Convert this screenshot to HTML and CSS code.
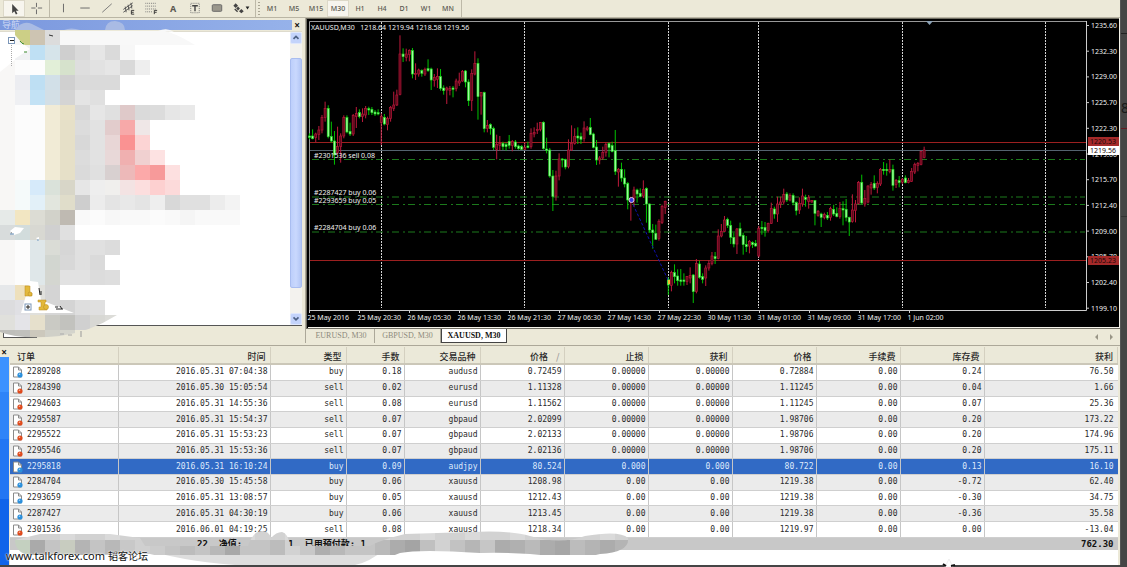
FILE: index.html
```html
<!DOCTYPE html>
<html lang="zh-CN">
<head>
<meta charset="utf-8">
<title>XAUUSD,M30</title>
<link rel="stylesheet" href="styles.css">
</head>
<body>
<div class="desktop">
<div class="app">
  <header class="toolbar">
    <button class="tool active" aria-label="Cursor"><svg viewBox="0 0 22 18"><path d="M9 3v10l2.300-2 1.800 3.500 1.700-.8-1.700-3.400h3z" fill="#444"/></svg></button>
    <button class="tool" aria-label="Crosshair"><svg viewBox="0 0 22 18"><path d="M11.500 3v4.500M11.500 10v5M6 8.500h4.500M13 8.500h4.500" stroke="#666" fill="none"/></svg></button>
    <span class="sep"></span>
    <button class="tool" aria-label="Vertical line"><svg viewBox="0 0 22 18"><path d="M11.500 4v9" stroke="#666"/></svg></button>
    <button class="tool" aria-label="Horizontal line"><svg viewBox="0 0 22 18"><path d="M6 8.500h10" stroke="#666"/></svg></button>
    <button class="tool" aria-label="Trendline"><svg viewBox="0 0 22 18"><path d="M6 13 16 4" stroke="#777"/></svg></button>
    <button class="tool" aria-label="Channel"><svg viewBox="0 0 22 18"><path d="M5 10 15 3M5 13l10-7M7 7l1 6M10 5l1 6M13 3l1 6" stroke="#555" fill="none"/><path d="M16.500 11h-3v4h3M13.500 13h2.500" stroke="#333" fill="none"/></svg></button>
    <button class="tool" aria-label="Fibonacci"><svg viewBox="0 0 22 18"><path d="M5 3.500h12M5 6.500h12M5 9.500h12M5 12.500h7" stroke="#777" stroke-dasharray="1 1"/><path d="M14.500 15v-4h3M14.500 13h2.500" stroke="#333" fill="none"/></svg></button>
    <button class="tool glyph">A</button>
    <button class="tool" aria-label="Text label"><svg viewBox="0 0 22 18"><rect x="6.500" y="3.500" width="9" height="10" fill="none" stroke="#777" stroke-dasharray="1 1"/><path d="M8 6h6M11 6v6" stroke="#444" stroke-width="1.500"/></svg></button>
    <button class="tool" aria-label="Rectangle"><svg viewBox="0 0 22 18"><rect x="6" y="5" width="10" height="7" rx="1" fill="#9a978c" stroke="#666"/></svg></button>
    <button class="tool wide" aria-label="Arrows"><svg viewBox="0 0 22 18"><path d="m5 6 2.500-2.500L10 6 7.500 8.500zM8 9l2-2 2 2-2 2zM11 12l2.500-2.500L16 12l-2.500 2zM6 10l1-1 3 3-1 1z" fill="#444"/><path d="M18 7h4l-2 3z" fill="#222"/></svg></button>
    <span class="sep"></span>
    <span class="grip"></span>
    <button class="tool period">M1</button>
    <button class="tool period">M5</button>
    <button class="tool period">M15</button>
    <button class="tool period active">M30</button>
    <button class="tool period">H1</button>
    <button class="tool period">H4</button>
    <button class="tool period">D1</button>
    <button class="tool period">W1</button>
    <button class="tool period">MN</button>
    <span class="sep"></span>
  </header>

  <main class="work">
    <aside class="nav">
      <div class="nav-head"><h2 class="nav-title">导航</h2><button class="close" aria-label="Close">×</button></div>
      <div class="tree">
        <div class="tree-body"></div>
        <div class="scroll">
          <button class="scroll-btn" aria-label="Up"><svg viewBox="0 0 10 12"><path d="m2 7 3-3 3 3" fill="none" stroke="#4d6185" stroke-width="2"/></svg></button>
          <span class="thumb"></span>
          <button class="scroll-btn" aria-label="Down"><svg viewBox="0 0 10 12"><path d="m2 4 3 3 3-3" fill="none" stroke="#4d6185" stroke-width="2"/></svg></button>
        </div>
      </div>
      <div class="nav-tabs"><span class="nav-tab"></span></div>
      <svg class="nav-blur" viewBox="0 18 306 325" aria-hidden="true">
        <defs><clipPath id="brush"><path d="M15 30H300V310L117 315Q90 332 60 336Q20 340 0 332V70Q15 58 30 49L22 43 15 35z"/></clipPath></defs>
        <path d="M15 31H165Q175 33 195 45H15z" fill="#f8f8f8"/>
        <path d="M15 30Q22 20 32 24L44 30zM64 30Q71 27 80 30zM105 30Q106 21 115 21Q125 22 125 30z" fill="#a9bbe4"/>
        <path d="M158 31Q167 27 174 32z" fill="#f8f8f8"/>
        <path d="M0 72 15 60V320H0z" fill="#f8f7f6"/>
        <path d="M11.500 45v22" stroke="#aaa" stroke-dasharray="1 1"/>
        <rect x="8.500" y="37.500" width="6" height="6" fill="#fff" stroke="#7b96b8"/><path d="M10 40.500h4" stroke="#222"/>
        <g id="nav-cells" clip-path="url(#brush)"></g>
        <path d="M20 41q2 3 4 3M24 52h3" stroke="#3c8a2c" fill="none"/><path d="M49 35l4 1M11 233l3-2" stroke="#333"/>
        <path d="M10 231l5-4 9 1-4 5-6 2zM36 238l3-1v4z" fill="#fff"/><path d="M10 234h4M37 240h2" stroke="#6a93bd"/>
        <path d="M21 313 30 281l8 1 3 18 33 13z" fill="#fff"/>
        <g fill="#e3b93c" stroke="#b88a1e" stroke-width=".5"><path d="M25 286h5v7h2v3h-7zM38 300h8v2h-1v5h2v3h-8v-3h2v-5h-3z"/><circle cx="30" cy="294" r="2"/><circle cx="46" cy="307" r="2.500"/></g>
        <rect x="25" y="304" width="6" height="6" fill="#fff" stroke="#7b96b8"/><path d="M26 307h4M28 305v4M39 288l1 7M41 291v4M55 307h3M56 309h7M60 306l2 3" stroke="#222"/>
        <path d="M81 331v6" stroke="#999"/><path d="M60 334h4M68 335h4" stroke="#aaa"/>
      </svg>
    </aside>

    <section class="charts">
      <svg class="chart" id="chart" viewBox="306 18 814 310" role="img" aria-label="XAUUSD,M30">
        <rect x="306" y="18" width="814" height="310" fill="#000"/>
        <path d="M306 18.500h814" stroke="#716f64"/><path d="M306.500 18v310" stroke="#716f64"/>
        <path d="M1119.500 18v310M308 327.500h812" stroke="#f4f2e8"/>
        <g id="grid-v" stroke="#d2d2d2" stroke-dasharray="2 1"></g>
        <g id="orders" stroke="#1c7a1c" stroke-dasharray="7 4 2 3"></g>
        <path d="M309 142.500h777M309 260.500h777" stroke="#9c2020"/>
        <path d="M309 150.500h777" stroke="#54636f"/>
        <path d="M309.500 310V21.500H1086" stroke="#999" fill="none"/>
        <path d="M309 310.500h777.500V21" stroke="#ccc" fill="none"/>
        <g id="candles" transform="scale(.333333)"></g>
        <path d="M631 200 668 280" stroke="#1010b0" stroke-dasharray="3 2"/>
        <circle cx="631.500" cy="200" r="2.500" fill="#3a38e0" stroke="#e6c8d8"/><path d="M669 280v4" stroke="#f0c030" stroke-width="2"/>
        <path d="M926 21h7l-3.500 4z" fill="#8ca2b6"/>
        <g class="chart-text" id="labels">
          <text x="311" y="30" xml:space="preserve">XAUUSD,M30   1218.64 1219.94 1218.58 1219.56</text>
        </g>
        <rect x="1088" y="137" width="31" height="9" fill="#a52a2a"/>
        <rect x="1088" y="146" width="31" height="9" fill="#fff"/>
        <rect x="1088" y="256" width="31" height="9" fill="#a52a2a"/>
        <g class="tag-text"><text x="1090" y="144">1220.53</text><text x="1090" y="153">1219.56</text><text x="1090" y="263">1205.23</text></g>
      </svg>
      <nav class="chart-tabs">
        <button class="chart-tab">EURUSD, M30</button>
        <button class="chart-tab">GBPUSD, M30</button>
        <button class="chart-tab current">XAUUSD, M30</button>
        <span class="tab-arrows"><svg viewBox="0 0 20 8"><path d="M4 1v6L1 4zM16 1v6l3-3z" fill="#999586"/></svg></span>
      </nav>
    </section>
  </main>

  <section class="terminal">
    <div class="side"><button class="close" aria-label="Close">×</button><span class="side-bar"></span></div>
    <div class="ledger">
      <table class="orders">
        <colgroup><col class="w108"><col class="w152"><col class="w76"><col class="w58"><col class="w76"><col class="w84"><col class="w84"><col class="w84"><col class="w84"><col class="w84"><col class="w84"><col></colgroup>
        <thead><tr><th class="first">订单</th><th>时间</th><th>类型</th><th>手数</th><th>交易品种</th><th>价格 <span class="sort">/</span></th><th>止损</th><th>获利</th><th>价格</th><th>手续费</th><th>库存费</th><th>获利</th></tr></thead>
        <tbody id="rows"></tbody>
        <tfoot><tr><td colspan="11"><div class="summary"><span>22</span><span class="equity">净值:</span><span>1</span><span>已用预付款: 1</span><span class="tail">5</span></div></td><td>762.30</td></tr></tfoot>
      </table>
      <svg class="foot-blur" viewBox="10 530 640 35" aria-hidden="true">
        <defs><clipPath id="smear"><path d="M15 540 40 534H110L140 538 145 546H248Q253 531 262 531Q269 531 271 538Q276 532 282 532Q288 533 290 546H370Q380 540 405 534L470 532Q510 530 530 536Q560 545 585 536Q620 530 628 538Q630 552 600 554Q580 560 550 556Q520 552 480 553Q420 549 400 553Q370 566 300 567Q200 566 150 554L30 556Q15 552 15 540z"/></clipPath></defs>
        <path d="M145 549H385Q370 562 355 565H235Q175 560 145 549z" fill="#dedede"/>
        <g id="foot-cells" clip-path="url(#smear)"></g>
      </svg>
      <svg class="spark" viewBox="0 0 16 8" aria-hidden="true"><path d="M8 0 4 8h8z" fill="#fff" stroke="#eee"/><path d="m2 5 3 2M10 7l4-1" stroke="#111" stroke-width="2"/></svg>
    </div>
    <p class="watermark">www.talkforex.com <span class="watermark-cn">韬客论坛</span></p>
  </section>
</div>
<div class="edge" aria-hidden="true"><span class="edge-a"></span><span class="edge-b">8</span><span class="edge-c"></span></div>
</div>
<script src="main.js"></script>
</body>
</html>
```
FILE: styles.css
```css
* { box-sizing: border-box; }
body { margin: 0; background: #454545; font-family: "Noto Sans", "Noto Sans CJK SC", sans-serif; font-size: 8px; }
button { font: inherit; border: 0; padding: 0; background: none; color: inherit; }
h2, p { margin: 0; font-weight: normal; }
svg { display: block; }

.desktop { display: flex; min-height: 100vh; padding-bottom: 2px; overflow: hidden; }
.app { flex: 1; min-width: 0; display: flex; flex-direction: column; background: #ece9d8; }
.edge { width: 7px; flex: none; display: flex; flex-direction: column; overflow: hidden; border-left: 1px solid #555; color: #191919; }
.edge-a { height: 34px; border-bottom: 1px solid #222; }
.edge-b { height: 95px; padding-top: 64px; font-size: 14px; border-bottom: 1px solid #631c22; }
.edge-c { height: 88px; border-bottom: 1px solid #333; }

.toolbar { height: 18px; display: flex; align-items: center; border-bottom: 1px solid #b9b5a4; padding-left: 3px; }
.tool { width: 22px; height: 17px; flex: none; text-align: center; color: #5a5850; }
.tool svg { width: 22px; height: 17px; overflow: visible; }
.tool.active { background: #f7f5ee; border: 1px solid #dcd8c8; }
.tool.active svg { width: 20px; }
.tool.wide { width: 25px; }
.glyph { font-size: 9px; font-weight: 700; }
.period { font-size: 7px; font-weight: 500; }
.sep { width: 1px; height: 17px; background: #bdb9a8; margin: 0 2px; }
.grip { width: 2px; height: 13px; margin-right: 1px; background: repeating-linear-gradient(#aaa694 0 1px, transparent 1px 3px); }

.work { display: flex; }
.nav { width: 306px; flex: none; position: relative; display: flex; flex-direction: column; border-right: 1px solid #aca899; }
.nav-head { height: 13px; display: flex; align-items: center; padding-top: 1px; }
.nav-title { width: 292px; height: 10px; line-height: 10px; padding-left: 2px; font-size: 9px; color: #cfdaf5; background: linear-gradient(90deg, #7b98de, #96b2ea); }
.close { width: 10px; line-height: 10px; font-size: 10px; font-weight: 700; color: #111; }
.tree { flex: 1; display: flex; width: 302px; background: #fff; border-bottom: 1px solid #555; border-top: 1px solid #dedbcd; }
.tree-body { flex: 1; }
.scroll { width: 12px; display: flex; flex-direction: column; justify-content: space-between; background: #f3f2ee; }
.scroll-btn { height: 12px; background: #c3d3fb; border-radius: 2px; border: 1px solid #dfe7fc; }
.scroll-btn svg { width: 10px; height: 10px; }
.thumb { flex: 1; margin: 14px 0 25px; background: linear-gradient(90deg, #bdcffb, #c9d8fd, #b3c6f5); border: 1px solid #a9bdf0; border-radius: 2px; }
.nav-tabs { height: 17px; padding-left: 3px; }
.nav-tab { display: block; width: 34px; height: 12px; background: #fff; border: 1px solid #555; border-top: 0; }
.nav-blur { position: absolute; inset: 0; width: 306px; }

.charts { flex: 1; min-width: 0; }
.chart { width: 100%; }
.chart-text, .tag-text { font-family: "Noto Sans", sans-serif; font-size: 7px; fill: #f0f0f0; }
.tag-text { fill: #1a0808; }
.chart-tabs { height: 15px; display: flex; align-items: flex-start; border-top: 1px solid #716f64; }
.chart-tab { width: 66px; height: 14px; line-height: 14px; font-family: "Liberation Serif", serif; font-size: 8px; color: #8d8a7c; border-right: 1px solid #aca899; }
.chart-tab:first-child { width: 67px; margin-left: 2px; }
.chart-tab.current { background: #fff; color: #111; border: 1px solid #444; border-top: 0; font-weight: 700; }
.tab-arrows { margin: 4px 6px 0 auto; width: 20px; }

.terminal { flex: 1; display: flex; position: relative; margin-top: 2px; border-top: 1px solid #aca899; padding-top: 1px; }
.side { width: 10px; flex: none; display: flex; flex-direction: column; }
.side .close { width: 8px; height: 10px; }
.side-bar { flex: 1; width: 9px; background: linear-gradient(#3c92ff 0 35px, #2f84f8 35px 82px, #2276f3 82px 142px, #1064ea 142px); }
.ledger { flex: 1; min-width: 0; position: relative; background: #fff; border-right: 2px solid #ece9d8; }
.orders { width: 100%; height: 203px; table-layout: fixed; border-collapse: collapse; font-family: "DejaVu Sans Mono", monospace; font-size: 8px; line-height: 12px; color: #2a2a2a; }
.w108 { width: 108px; } .w152 { width: 152px; } .w76 { width: 76px; } .w58 { width: 58px; } .w84 { width: 84px; }
.orders thead tr { height: 17px; }
.orders th { background: #ebe9d9; border-bottom: 2px solid #cbc7b8; border-right: 1px solid #d4d0c0; padding: 2px 4px 0; font: 500 9px/13px "Noto Sans CJK SC", sans-serif; text-align: right; white-space: nowrap; }
.orders th.first { text-align: left; padding-left: 7px; }
.sort { color: #999; margin: 0 0 0 6px; }
.orders td { padding: 0 2px; text-align: right; border-right: 1px solid #c6c6c6; border-bottom: 1px solid #cfcfcf; white-space: nowrap; }
.orders td:last-child { padding-right: 4px; border-right: 0; }
.orders tbody tr:nth-child(even) { background: #ebebeb; }
.orders tbody tr.selected { background: #316ac5; color: #dfe9fb; }
.ticket { display: flex; align-items: center; gap: 4px; }
.ticket svg { width: 11px; height: 12px; }
.orders tfoot td { background: #c8c8c8; border: 0; font-size: 9px; font-weight: 700; color: #111; }
.summary { display: flex; gap: 11px; padding-left: 185px; font-family: "DejaVu Sans Mono", "Noto Sans CJK SC", monospace; line-height: 12px; }
.equity { margin-right: 35px; }
.tail { margin-left: 242px; }
.foot-blur { position: absolute; left: 0; bottom: 0; width: 640px; height: 35px; }
.spark { position: absolute; right: 161px; bottom: -2px; width: 16px; }
.watermark { position: absolute; left: 6px; bottom: 1px; font-size: 11px; line-height: 15px; color: #111; text-shadow: 0 0 2px #fff, 0 0 2px #fff; }
.watermark-cn { font-size: 10px; }
```
FILE: main.js
```js
const NS = 'http://www.w3.org/2000/svg';
function add(parent, tag, attrs, text) {
  const el = document.createElementNS(NS, tag);
  for (const k in attrs) el.setAttribute(k, attrs[k]);
  if (text) el.textContent = text;
  parent.appendChild(el);
}
const $ = id => document.getElementById(id);

[381.5, 524.5, 668.5, 758.5, 902.5, 1045.5].forEach(x => add($('grid-v'), 'path', { d: `M${x} 22V308` }));
[159.5, 197, 204.5, 232].forEach(y => add($('orders'), 'path', { d: `M312 ${y}H1085` }));
[['#2301536 sell 0.08', 158], ['#2287427 buy 0.06', 195], ['#2293659 buy 0.05', 203], ['#2284704 buy 0.06', 230]]
  .forEach(([t, y]) => add($('labels'), 'text', { x: 314, y }, t));
['1235.60', '1232.30', '1229.00', '1225.70', '1222.30', '1219.00', '1215.70', '1212.40', '1209.00', '1205.70', '1202.40', '1199.10']
  .forEach((t, i) => {
    const y = 25.5 + i * 25.7;
    add($('labels'), 'text', { x: 1091, y: y + 2.5 }, t);
    add($('labels'), 'path', { d: `M1086 ${y}h3`, stroke: '#ccc' });
  });
['25 May 2016', '25 May 20:30', '26 May 05:30', '26 May 13:30', '26 May 21:30', '27 May 06:30', '27 May 14:30', '27 May 22:30',
  '30 May 11:30', '31 May 01:00', '31 May 09:00', '31 May 17:00', '1 Jun 02:00'].forEach((t, i) => {
  const x = 309.5 + i * 50;
  add($('labels'), 'text', { x: x - 2, y: 320 }, t);
  add($('labels'), 'path', { d: `M${x} 310v3`, stroke: '#ccc' });
});

// direction, high, body top, body bottom, low
const candles = `g 400 408 412 418,g 388 408 416 418,r 398 402 412 426,r 378 390 404 420,r 345 352 390 400,r 305 325 352 365,g 316 325 410 415,g 365 410 423 428,g 393 423 465 494,r 380 440 458 462,r 400 408 440 488,r 346 353 408 415,g 346 353 396 400,g 368 394 402 408,r 342 347 402 408,r 321 340 350 384,g 328 338 350 355,r 325 342 350 366,r 318 325 345 355,g 320 326 330 345,g 321 328 338 345,g 330 336 342 348,g 328 338 342 346,r 340 349 367 435,g 342 352 372 376,r 350 356 374 391,r 318 322 356 365,r 275 315 325 333,r 269 285 315 318,r 106 162 284 286,g 145 162 170 186,r 146 162 172 184,r 148 152 164 184,g 144 152 222 235,r 190 220 224 240,r 206 210 222 230,g 208 212 220 230,r 203 208 222 228,g 178 206 212 216,g 203 207 240 270,r 222 232 242 260,r 205 230 238 264,g 207 230 265 272,g 256 264 272 284,r 260 264 270 312,r 258 266 272 286,g 258 264 268 292,r 236 243 266 274,r 218 243 249 258,r 210 214 243 245,g 210 213 246 262,g 238 246 302 318,r 208 220 302 333,r 154 190 222 226,g 175 190 290 359,r 276 278 288 344,g 275 278 386 397,r 360 377 386 397,g 370 374 386 404,g 380 386 442 450,r 404 434 448 478,r 408 430 436 452,g 425 430 440 450,g 428 434 440 452,g 405 424 436 446,r 420 424 436 454,g 420 426 440 446,g 434 438 446 449,g 435 440 448 450,r 427 442 448 450,g 425 438 442 445,r 385 400 440 446,r 382 398 402 412,r 368 388 392 402,r 366 368 388 394,g 364 367 446 449,g 413 447 451 460,g 444 450 528 533,g 510 528 590 633,r 512 528 588 602,r 460 477 528 541,g 474 477 480 502,g 476 479 501 508,r 418 450 500 505,r 376 430 450 453,r 385 409 430 434,g 382 408 414 432,g 398 410 418 432,r 364 384 416 425,r 378 384 388 394,g 354 383 404 406,g 398 402 442 445,g 420 441 480 495,r 468 474 480 493,r 440 457 474 480,r 428 434 458 470,g 427 431 442 472,g 425 437 454 457,g 390 452 514 525,r 504 508 516 560,g 488 508 534 545,g 508 534 552 562,g 546 551 600 628,r 590 594 604 662,r 560 570 596 620,g 566 570 582 608,g 565 580 590 592,r 541 568 588 594,g 562 566 612 668,g 610 612 690 698,g 672 690 698 746,g 674 700 718 720,r 658 664 716 722,r 614 620 668 672,r 602 604 622 642,g 832 838 855 885,r 812 818 856 874,g 793 818 830 850,g 808 828 842 857,g 807 840 844 857,g 820 840 844 857,r 828 830 844 855,r 802 826 834 850,g 822 825 875 909,r 777 790 875 880,g 782 792 832 836,g 820 830 838 850,r 796 804 834 858,r 780 790 804 812,r 756 768 790 796,g 756 770 776 792,r 688 708 776 778,r 672 694 708 712,r 648 660 695 696,g 653 658 676 684,g 662 676 712 732,g 698 712 732 742,r 684 687 732 762,g 668 686 708 710,g 698 706 734 764,g 708 734 740 756,r 720 724 738 760,g 724 728 734 744,g 720 730 738 740,r 678 685 768 772,g 663 682 686 704,g 666 682 692 710,r 668 670 692 698,r 608 625 670 672,g 620 627 642 656,r 590 612 642 666,r 590 606 612 624,r 566 584 606 614,g 576 582 600 606,r 580 586 600 604,g 580 586 608 616,g 604 608 632 646,r 592 610 630 642,r 566 588 612 620,g 584 592 598 620,r 585 592 604 626,r 600 602 606 608,g 600 602 640 676,r 630 634 646 650,g 638 642 652 681,r 638 644 652 658,g 636 646 654 660,r 620 626 652 662,g 614 628 642 648,g 622 640 650 652,r 606 625 650 656,g 604 626 630 676,g 597 628 652 664,g 650 652 666 708,r 583 630 664 668,r 600 612 632 667,r 543 547 610 614,g 524 547 609 612,r 570 595 612 620,r 556 558 606 610,r 546 554 564 584,g 526 550 564 570,r 544 550 562 580,r 504 508 552 558,g 486 508 512 524,g 490 508 512 527,r 478 508 514 520,g 494 508 556 572,r 537 542 554 564,g 528 542 548 562,r 534 538 546 552,g 526 534 548 550,r 534 542 548 550,r 504 514 544 546,r 488 494 516 522,r 486 490 496 514,r 452 454 494 496,r 440 450 472 475`;
candles.split(',').forEach((row, i) => {
  const [dir, hi, top, bot, lo] = row.split(' ');
  const up = dir === 'r';
  const x = 928.5 + i * 9.36;
  add($('candles'), 'path', { d: `M${x} ${hi}V${lo}`, stroke: up ? '#c01a3c' : '#00c400', 'stroke-width': 3 });
  add($('candles'), 'rect', { x: x - 3, y: top, width: 6, height: bot - top, fill: up ? '#5c0a1a' : '#a0ffa0', stroke: up ? '#b8163a' : '#20dc20', 'stroke-width': 2 });
});

// [row, first column, colours]
[[2, 1, 'cccf86 cdc4b2 dcdcdc'],
 [3, 1, 'f0f1f3 bfe0f4 d6e4ea cfcfcf dadada e6e6e6 dadada f7f7f7'],
 [4, 1, 'fcfcfc fdfdfd e2efd8 d6e2cc dedede e2e2e2 e6e6e6 d9d9d9 eeeeee'],
 [5, 1, 'ecedf1 bedff3 d2e0e8 d0d0d0 dadada dadada dadada'],
 [6, 1, 'eff0f3 c3e2f5 d3dfe6 d4d4d4 e4e4e4 e0e0e0'],
 [7, 1, 'fcfcfc fcfcfc f1ebd6 e8e1c8 d8d8d8 e6e6e6 e0e0e0 dfc9c9 dadada dcdcdc e6e6e6 e9e9e9'],
 [8, 1, 'fcfcfc fcfcfc f1ebd6 e6e0c8 dcdcdc e2e2e2 e2cccc f7a9a9 efe7e7'],
 [9, 1, 'fcfcfc fcfcfc f1ebd6 e6e0c8 d8d8d8 e2e2e2 e8d6d6 fa9292 fcd4d4'],
 [10, 1, 'fcfcfc fcfcfc f1ebd6 e6e0c8 dcdcdc e2e2e2 e8d8d8 f0b0b0 f0d0d0 fde2e2'],
 [11, 1, 'fcfcfc fcfcfc f1ebd6 e6e0c8 dadada e0e0e0 d8d0d0 edb9b9 fca9a9 f79a9a fde0e0'],
 [12, 0, 'f8f7f5 f5fafa d6eafa dae2da d8d6c8 e6e6e6 eeeeee f0efed f3e3e3 fcdede fdd0d0 fcdada'],
 [13, 0, 'f8f7f5 f5fafa e2f0f8 e2e6de e0ddca cecece ececec e4e4e4 e8e8e8 e4e4e4 eeeeee d8d8d8 e0e0e0 e0e0e0 ececec f3f3f3'],
 [14, 0, 'e6eae8 f2e6c2 dcdcd4 d2d2ca bfbab2 f9f9f9 fbfbfb f7f7f7 f9f9f9 f9f9f9 fbfbfb f9f9f9 f5f5f5 f9f9f9 f9f9f9 f9f9f9'],
 [15, 0, 'd8dcdc d2dcdc d8d8d2 d0d0d0 e0e0e0'],
 [16, 1, 'fcfcfc dfe7e9 dadcd6 d6d6d6 e0e0e0 e0e0e0 dcdcdc'],
 [17, 1, 'fcfcfc dfe7e9 d2d6d0 d8d8d8 e0e0e0 dadada'],
 [18, 1, 'fcfcfc dfe7e9 d4d6d0 e2e2e2 e2e2e2 dcdcdc dedede'],
 [19, 0, 'e6e8ea eee0bc e0e0dc d4d4d4'],
 [20, 0, 'dcdcde e0e0e4 e0e0dc d6d6d6 d4d4d4 dedede e0e0e0'],
 [21, 0, 'e0e0dc e4e4e8 e6e0cc cacac4 c2c2be d0d0d0 d8d8d4 dcdcd8'],
 [22, 0, 'bebeba c0c0bc ccc8bc d0d0c8 d4d4cc']
].forEach(([r, c, cols]) => cols.split(' ').forEach((f, k) =>
  add($('nav-cells'), 'rect', { x: (c + k) * 15, y: r * 15, width: 15, height: 15, fill: '#' + f })));

const greys = 'c4d0c0 aaaaaa c4c4c4 c8ccc0 b4b4b4 c4c4c4 b8b8b8 c8c8c8 d0d0d0 cccccc c4c4c4 bcbcbc c4c4c4 b8b8b8 a8a8a8 c4c4c4 c4c4c4 bcbcbc d2d2d2 c8c8c8 aeaeae b8b8b8 c4c4c4 c4c4c4 bababa acacac a4a4a4 c0c0c0 d2d2d2 c2c2c2 b6b6b6 c6c6c6 acacac b0b0b0 bababa acacac a6a6a6 bcbcbc b4b4b4 acacac b4b4b4 bcbcbc'.split(' ');
greys.forEach((f, k) => {
  add($('foot-cells'), 'rect', { x: 15 + k * 15, y: 530, width: 15, height: 10, fill: k % 3 ? '#d2d2d2' : '#dadada' });
  add($('foot-cells'), 'rect', { x: 15 + k * 15, y: 540, width: 15, height: 15, fill: '#' + f });
});

const rows = `2289208|2016.05.31 07:04:38|buy|0.18|audusd|0.72459|0.00000|0.00000|0.72884|0.00|0.24|76.50
2284390|2016.05.30 15:05:54|sell|0.02|eurusd|1.11328|0.00000|0.00000|1.11245|0.00|0.04|1.66
2294603|2016.05.31 14:55:36|sell|0.08|eurusd|1.11562|0.00000|0.00000|1.11245|0.00|0.07|25.36
2295587|2016.05.31 15:54:37|sell|0.07|gbpaud|2.02099|0.00000|0.00000|1.98706|0.00|0.20|173.22
2295522|2016.05.31 15:53:23|sell|0.07|gbpaud|2.02133|0.00000|0.00000|1.98706|0.00|0.20|174.96
2295546|2016.05.31 15:53:36|sell|0.07|gbpaud|2.02136|0.00000|0.00000|1.98706|0.00|0.20|175.11
2295818|2016.05.31 16:10:24|buy|0.09|audjpy|80.524|0.000|0.000|80.722|0.00|0.13|16.10
2284704|2016.05.30 15:45:58|buy|0.06|xauusd|1208.98|0.00|0.00|1219.38|0.00|-0.72|62.40
2293659|2016.05.31 13:08:57|buy|0.05|xauusd|1212.43|0.00|0.00|1219.38|0.00|-0.30|34.75
2287427|2016.05.31 04:30:19|buy|0.06|xauusd|1213.45|0.00|0.00|1219.38|0.00|-0.36|35.58
2301536|2016.06.01 04:19:25|sell|0.08|xauusd|1218.34|0.00|0.00|1219.97|0.00|0.00|-13.04`;
$('rows').innerHTML = rows.split('\n').map(line => {
  const [id, ...rest] = line.split('|');
  const dot = rest[1] === 'buy' ? '#2a8fdc' : '#e04a1c';
  const icon = `<svg viewBox="0 0 11 12"><path d="M1.500 1h5l3 3v7h-8z" fill="#fff" stroke="#8a8a8a"/><path d="M6.500 1v3h3" fill="none" stroke="#8a8a8a"/><circle cx="8" cy="9" r="2.600" fill="${dot}"/><circle cx="7.500" cy="8.300" r=".8" fill="#fff" opacity=".6"/></svg>`;
  return `<tr${id === '2295818' ? ' class="selected"' : ''}><td><div class="ticket">${icon}<span>${id}</span></div></td>${rest.map(v => `<td>${v}</td>`).join('')}</tr>`;
}).join('');
```
